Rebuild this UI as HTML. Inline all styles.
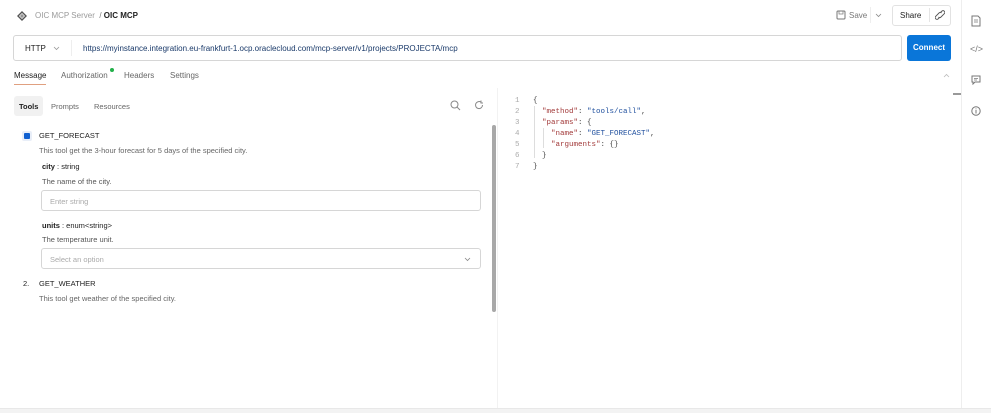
<!DOCTYPE html><html><head><style>
*{box-sizing:border-box;margin:0;padding:0}
body{width:991px;height:413px;background:#fff;font-family:"Liberation Sans",sans-serif;position:relative;overflow:hidden;color:#212121}
.a{position:absolute;white-space:nowrap}
.s8{font-size:8px}.s7{font-size:7.5px}
.mono{font-family:"Liberation Mono",monospace;font-size:7.5px}
.k{color:#a23a3a}.v{color:#1f4f9e}.n{color:#aaa}
</style></head><body>
<svg class="a" style="left:17px;top:11px" width="10" height="10" viewBox="0 0 10 10"><path d="M5 1L9 5L5 9L1 5Z" fill="none" stroke="#555" stroke-width="1.4"/><path d="M3 5h4M5 3v4" stroke="#555" stroke-width=".8"/></svg>
<div class="a s8" style="left:35px;top:11px;color:#9a9a9a">OIC MCP Server&nbsp; <span style="color:#777">/</span> <b style="color:#222">OIC MCP</b></div>
<svg class="a" style="left:836px;top:10px" width="10" height="10" viewBox="0 0 10 10"><rect x="1" y="1" width="8" height="8" rx="1" fill="none" stroke="#777"/><rect x="3" y="1" width="4" height="3" fill="none" stroke="#777" stroke-width=".7"/></svg>
<div class="a s8" style="left:849px;top:11px;color:#777">Save</div>
<div class="a" style="left:870px;top:7px;width:1px;height:16px;background:#eee"></div>
<svg class="a" style="left:875px;top:13px" width="7" height="5" viewBox="0 0 7 5"><path d="M1 1l2.5 2.5L6 1" fill="none" stroke="#888" stroke-width=".8"/></svg>
<div class="a" style="left:892px;top:5px;width:59px;height:21px;border:1px solid #e2e2e2;border-radius:3px"></div>
<div class="a s8" style="left:900px;top:11px">Share</div>
<div class="a" style="left:929px;top:8px;width:1px;height:14px;background:#e5e5e5"></div>
<svg class="a" style="left:935px;top:10px" width="10" height="10" viewBox="0 0 10 10"><path d="M5.5 2.5l1.5-1.5a1.8 1.8 0 0 1 2.5 2.5L6 7a1.8 1.8 0 0 1-2.5 0M4.5 7.5L3 9a1.8 1.8 0 0 1-2.5-2.5L4 3a1.8 1.8 0 0 1 2.5 0" fill="none" stroke="#555" stroke-width=".9"/></svg>
<div class="a" style="left:13px;top:35px;width:889px;height:26px;border:1px solid #d6d6d6;border-radius:3px"></div>
<div class="a s8" style="left:25px;top:44px">HTTP</div>
<svg class="a" style="left:53px;top:46px" width="7" height="5" viewBox="0 0 7 5"><path d="M1 1l2.5 2.5L6 1" fill="none" stroke="#999" stroke-width=".8"/></svg>
<div class="a" style="left:71px;top:40px;width:1px;height:16px;background:#eee"></div>
<div class="a s8" style="left:83px;top:44px;color:#1a3a6a">https://myinstance.integration.eu-frankfurt-1.ocp.oraclecloud.com/mcp-server/v1/projects/PROJECTA/mcp</div>
<div class="a s8" style="left:907px;top:35px;width:44px;height:26px;background:#0a76d9;border-radius:3px;color:#fff;text-align:center;line-height:26px;font-weight:bold">Connect</div>
<div class="a s8" style="left:14px;top:71px">Message</div>
<div class="a" style="left:14px;top:84px;width:32px;height:1px;background:#e0a080"></div>
<div class="a s8" style="left:61px;top:71px;color:#666">Authorization</div>
<div class="a" style="left:110px;top:68px;width:4px;height:4px;border-radius:50%;background:#22b04a"></div>
<div class="a s8" style="left:124px;top:71px;color:#666">Headers</div>
<div class="a s8" style="left:170px;top:71px;color:#666">Settings</div>
<svg class="a" style="left:943px;top:73px" width="7" height="5" viewBox="0 0 7 5"><path d="M1 4l2.5-2.5L6 4" fill="none" stroke="#bbb" stroke-width=".8"/></svg>
<div class="a" style="left:14px;top:96px;width:29px;height:20px;background:#f1f1f1;border-radius:3px"></div>
<div class="a s7" style="left:19px;top:102px"><b>Tools</b></div>
<div class="a s7" style="left:51px;top:102px;color:#666">Prompts</div>
<div class="a s7" style="left:94px;top:102px;color:#666">Resources</div>
<svg class="a" style="left:450px;top:100px" width="11" height="11" viewBox="0 0 11 11"><circle cx="4.5" cy="4.5" r="3.5" fill="none" stroke="#888"/><path d="M7 7l3 3" stroke="#888"/></svg>
<svg class="a" style="left:474px;top:100px" width="10" height="10" viewBox="0 0 10 10"><path d="M8.5 5A3.5 3.5 0 1 1 7 2.2" fill="none" stroke="#888"/><path d="M7 0.5v2.5h2" fill="none" stroke="#888"/></svg>
<div class="a" style="left:22px;top:131px;width:10px;height:10px;background:#e8eef8;border-radius:2px"></div>
<div class="a" style="left:24px;top:133px;width:6px;height:6px;background:#1060d0;border-radius:1px"></div>
<div class="a s7" style="left:39px;top:131px;color:#222">GET_FORECAST</div>
<div class="a s7" style="left:39px;top:146px;color:#666">This tool get the 3-hour forecast for 5 days of the specified city.</div>
<div class="a s7" style="left:42px;top:162px"><b>city</b> : string</div>
<div class="a s7" style="left:42px;top:177px;color:#555">The name of the city.</div>
<div class="a" style="left:41px;top:190px;width:440px;height:21px;border:1px solid #d6d6d6;border-radius:3px"></div>
<div class="a s7" style="left:50px;top:197px;color:#aaa">Enter string</div>
<div class="a s7" style="left:42px;top:221px"><b>units</b> : enum&lt;string&gt;</div>
<div class="a s7" style="left:42px;top:235px;color:#555">The temperature unit.</div>
<div class="a" style="left:41px;top:248px;width:440px;height:21px;border:1px solid #d6d6d6;border-radius:3px"></div>
<div class="a s7" style="left:50px;top:255px;color:#aaa">Select an option</div>
<svg class="a" style="left:464px;top:257px" width="7" height="5" viewBox="0 0 7 5"><path d="M1 1l2.5 2.5L6 1" fill="none" stroke="#888" stroke-width=".8"/></svg>
<div class="a s7" style="left:23px;top:279px;color:#222">2.</div>
<div class="a s7" style="left:39px;top:279px;color:#222">GET_WEATHER</div>
<div class="a s7" style="left:39px;top:294px;color:#666">This tool get weather of the specified city.</div>
<div class="a" style="left:492px;top:125px;width:4px;height:187px;background:#a8a8a8;border-radius:2px"></div>
<div class="a" style="left:497px;top:88px;width:1px;height:320px;background:#f2f2f2"></div>
<div class="a mono n" style="left:515px;top:96px;line-height:11px">1<br>2<br>3<br>4<br>5<br>6<br>7</div>
<div class="a" style="left:534px;top:106px;width:1px;height:52px;background:#ddd"></div>
<div class="a" style="left:543px;top:128px;width:1px;height:20px;background:#ddd"></div>
<div class="a mono" style="left:533px;top:96px;line-height:11px;color:#444">{<br>&nbsp;&nbsp;<span class="k">"method"</span>: <span class="v">"tools/call"</span>,<br>&nbsp;&nbsp;<span class="k">"params"</span>: {<br>&nbsp;&nbsp;&nbsp;&nbsp;<span class="k">"name"</span>: <span class="v">"GET_FORECAST"</span>,<br>&nbsp;&nbsp;&nbsp;&nbsp;<span class="k">"arguments"</span>: {}<br>&nbsp;&nbsp;}<br>}</div>
<div class="a" style="left:953px;top:93px;width:8px;height:2px;background:#999"></div>
<div class="a" style="left:961px;top:0;width:1px;height:413px;background:#eee"></div>
<svg class="a" style="left:971px;top:15px" width="10" height="12" viewBox="0 0 10 12"><path d="M1 1h6l2 2v8H1z" fill="none" stroke="#777"/><path d="M3 5h4M3 7h4" stroke="#777" stroke-width=".8"/></svg>
<div class="a" style="left:970px;top:44px;font-size:9px;color:#777">&lt;/&gt;</div>
<svg class="a" style="left:971px;top:75px" width="10" height="10" viewBox="0 0 10 10"><path d="M1 1h8v6H4l-2 2V7H1z" fill="none" stroke="#777"/><path d="M3 3.5h4M3 5h3" stroke="#777" stroke-width=".7"/></svg>
<svg class="a" style="left:971px;top:106px" width="10" height="10" viewBox="0 0 10 10"><circle cx="5" cy="5" r="4.2" fill="none" stroke="#777"/><path d="M5 4v3.5M5 2.5v.8" stroke="#777"/></svg>
<div class="a" style="left:0;top:408px;width:991px;height:5px;background:#f3f3f3;border-top:1px solid #e8e8e8"></div>
</body></html>
